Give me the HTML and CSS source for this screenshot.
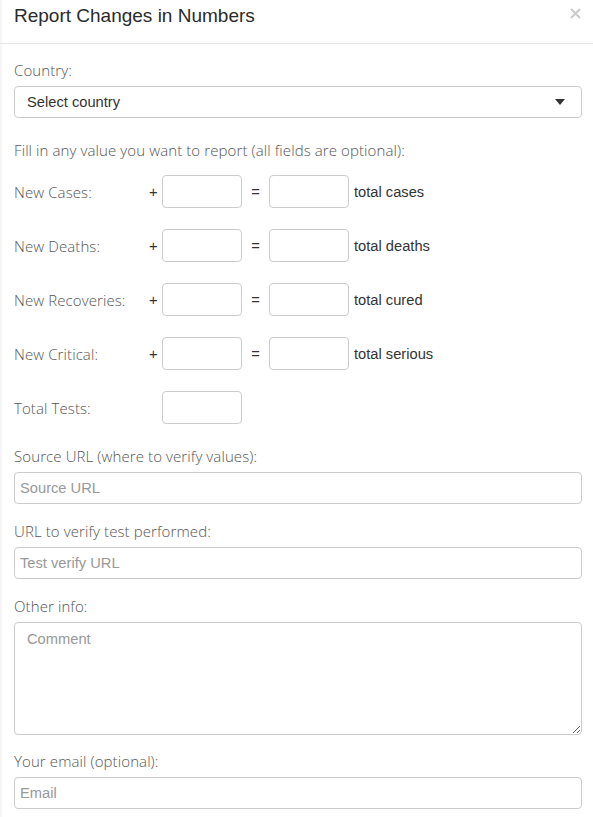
FILE: index.html
```html
<!DOCTYPE html>
<html>
<head>
<meta charset="utf-8">
<link rel="stylesheet" href="styles.css">
</head>
<body>
<div class="modal">
  <div class="header">
    <h4 class="title">Report Changes in Numbers</h4>
    <span class="close"><svg width="11" height="11" viewBox="0 0 11 11"><path d="M1 1 L10 10 M10 1 L1 10" stroke="#cbcbcb" stroke-width="2" fill="none"/></svg></span>
  </div>
  <div class="content">
    <label class="lbl lbl-first">Country:</label>
    <div class="select">
      <span>Select country</span>
      <span class="caret"></span>
    </div>
    <p class="lbl lbl-fill">Fill in any value you want to report (all fields are optional):</p>
    <div class="rows">
      <div class="row">
        <span class="rlabel">New Cases:</span>
        <span class="plus">+</span>
        <input class="num" type="text">
        <span class="eq">=</span>
        <input class="num" type="text">
        <span class="total">total cases</span>
      </div>
      <div class="row">
        <span class="rlabel">New Deaths:</span>
        <span class="plus">+</span>
        <input class="num" type="text">
        <span class="eq">=</span>
        <input class="num" type="text">
        <span class="total">total deaths</span>
      </div>
      <div class="row">
        <span class="rlabel">New Recoveries:</span>
        <span class="plus">+</span>
        <input class="num" type="text">
        <span class="eq">=</span>
        <input class="num" type="text">
        <span class="total">total cured</span>
      </div>
      <div class="row">
        <span class="rlabel">New Critical:</span>
        <span class="plus">+</span>
        <input class="num" type="text">
        <span class="eq">=</span>
        <input class="num" type="text">
        <span class="total">total serious</span>
      </div>
      <div class="row">
        <span class="rlabel">Total Tests:</span>
        <span class="plus"></span>
        <input class="num" type="text">
      </div>
    </div>
    <label class="lbl lbl-src">Source URL (where to verify values):</label>
    <input class="wide" type="text" placeholder="Source URL">
    <label class="lbl lbl-next">URL to verify test performed:</label>
    <input class="wide" type="text" placeholder="Test verify URL">
    <label class="lbl lbl-next">Other info:</label>
    <textarea class="comment" placeholder="Comment"></textarea>
    <label class="lbl lbl-email">Your email (optional):</label>
    <input class="wide" type="text" placeholder="Email">
  </div>
</div>
</body>
</html>
```

FILE: styles.css
```css
html, body {
  margin: 0;
  padding: 0;
  background: #fff;
}
body {
  font-family: "Liberation Sans", Arial, sans-serif;
  font-size: 14.7px;
  color: #333;
}
.modal {
  box-shadow: inset 3px 0 3px -2px rgba(0, 0, 0, 0.07);
  min-height: 817px;
}
.header {
  height: 43px;
  border-bottom: 1px solid #e5e5e5;
  display: flex;
  align-items: flex-start;
  justify-content: space-between;
  padding: 0 12px 0 14px;
}
.title {
  margin: 5px 0 0 0;
  font-size: 19px;
  font-weight: normal;
  line-height: 22px;
  color: #2b2b2b;
}
.close {
  display: flex;
  margin-top: 8px;
}
.content {
  display: flex;
  flex-direction: column;
  padding: 0 11px 0 14px;
}
.lbl, .rlabel {
  font-family: "Open Sans", "Liberation Sans", sans-serif;
  font-weight: 300;
  font-size: 15px;
  letter-spacing: 0.1px;
  color: #555;
}
.lbl {
  display: block;
  margin: 0;
  line-height: 20px;
}
.lbl-first { margin-top: 16px; margin-bottom: 6px; }
.lbl-fill { margin-top: 22px; margin-bottom: 15px; }
.lbl-src { margin-top: 22px; margin-bottom: 6px; }
.lbl-next { margin-top: 17px; margin-bottom: 6px; }
.lbl-email { margin-top: 16px; margin-bottom: 6px; }
.select {
  box-sizing: border-box;
  height: 32px;
  border: 1px solid #ccc;
  border-radius: 4px;
  display: flex;
  align-items: center;
  justify-content: space-between;
  padding: 0 16px 0 12px;
  color: #333;
}
.caret {
  width: 0;
  height: 0;
  border-left: 5px solid transparent;
  border-right: 5px solid transparent;
  border-top: 6px solid #333;
}
.rows {
  display: flex;
  flex-direction: column;
  gap: 21px;
}
.row {
  display: flex;
  align-items: center;
  height: 33px;
}
.rlabel {
  width: 135px;
}
.plus {
  width: 13px;
  color: #333;
}
.eq {
  width: 27px;
  text-align: center;
  color: #333;
}
.num {
  box-sizing: border-box;
  width: 80px;
  height: 33px;
  border: 1px solid #ccc;
  border-radius: 4px;
  margin: 0;
  padding: 0 6px;
  font: inherit;
  outline: none;
}
.total {
  margin-left: 5px;
  color: #333;
}
.wide {
  box-sizing: border-box;
  width: 568px;
  height: 32px;
  border: 1px solid #ccc;
  border-radius: 4px;
  margin: 0;
  padding: 0 5px;
  font: inherit;
  color: #333;
  outline: none;
}
.wide::placeholder, .comment::placeholder {
  color: #999;
}
.comment {
  box-sizing: border-box;
  width: 568px;
  height: 113px;
  border: 1px solid #ccc;
  border-radius: 4px;
  margin: 0;
  padding: 7px 12px;
  font: inherit;
  line-height: 18px;
  outline: none;
}
```
